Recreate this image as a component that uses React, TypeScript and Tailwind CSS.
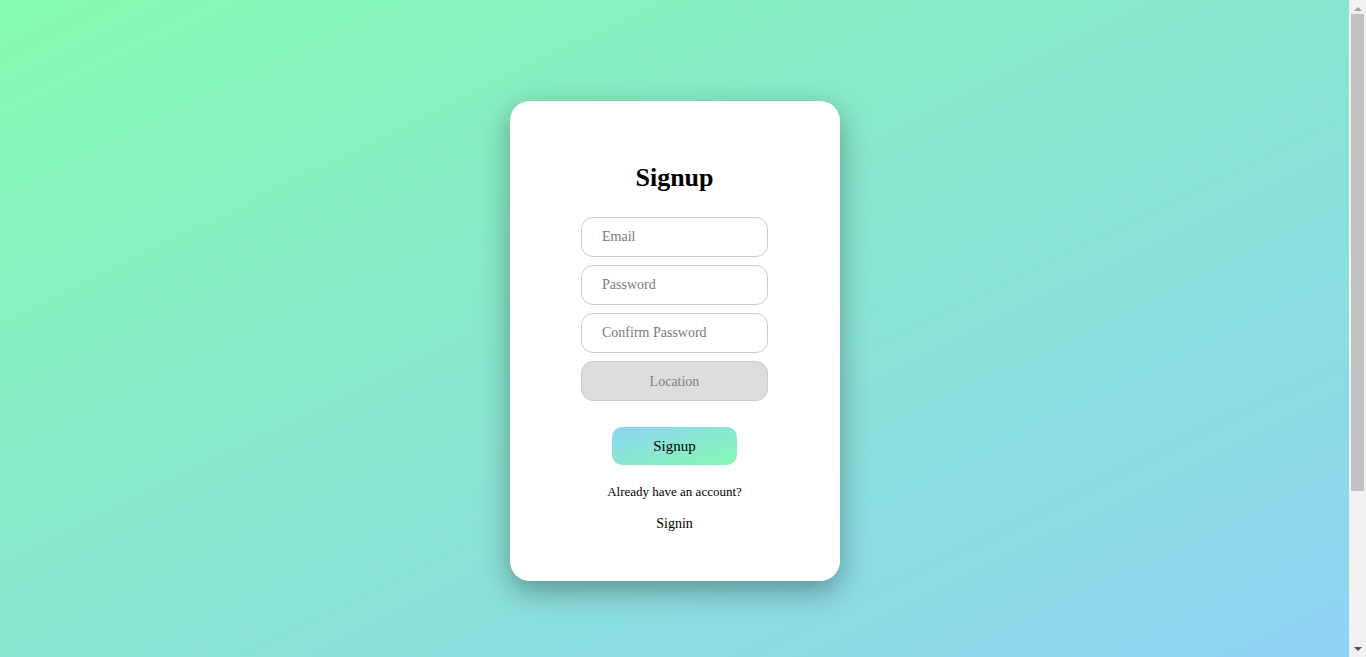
// Pagina di registrazione: card bianca centrata su sfondo sfumato verde/azzurro.
// A destra una barra di scorrimento disegnata (nel riferimento c'e quella del browser).

const campoCls =
  "h-10 w-full rounded-xl border border-[#cccccc] bg-white px-5 text-[14px] text-black outline-none placeholder:text-[#7a7a7a]";

function BarraScorrimento() {
  return (
    <div className="flex h-full w-[17px] shrink-0 flex-col items-center bg-[#f1f1f1]">
      <div className="flex h-[17px] w-full items-center justify-center">
        <div className="h-0 w-0 border-x-[4px] border-b-[4px] border-x-transparent border-b-[#a3a3a3]" />
      </div>
      <div className="mt-[-3px] h-[477px] w-[13px] bg-[#c1c1c1]" />
      <div className="flex-1" />
      <div className="flex h-[17px] w-full items-center justify-center">
        <div className="h-0 w-0 border-x-[4px] border-t-[4px] border-x-transparent border-t-[#505050]" />
      </div>
    </div>
  );
}

export default function App() {
  return (
    <div
      className="flex h-screen overflow-hidden text-black"
      style={{ fontFamily: '"Liberation Serif", "Times New Roman", serif' }}
    >
      <main className="flex-1 bg-[linear-gradient(to_bottom_right,#84fab0,#8fd3f4)] pt-[101px]">
        <div className="mx-auto flex w-[330px] flex-col items-center rounded-[20px] bg-white pb-[49px] pt-[62px] shadow-[0_10px_30px_rgba(0,0,0,0.35)]">
          <h1 className="text-[26px] leading-[30px] font-bold">Signup</h1>

          <form className="mt-[24px] flex w-[187px] flex-col gap-2">
            <input type="email" placeholder="Email" className={campoCls} />
            <input type="password" placeholder="Password" className={campoCls} />
            <input
              type="password"
              placeholder="Confirm Password"
              className={campoCls}
            />
            <button
              type="button"
              className="h-10 w-full rounded-xl border border-[#cccccc] bg-[#dddddd] text-[14px] text-[#808080]"
            >
              Location
            </button>
          </form>

          <button
            type="button"
            className="mt-[26px] h-[38px] w-[125px] rounded-[10px] bg-[linear-gradient(to_bottom_right,#8fd3f4,#84fab0)] text-[15px] text-black"
          >
            Signup
          </button>

          <p className="mt-[19px] text-[13px] leading-4">Already have an account?</p>
          <a href="#" className="mt-[16px] text-[14px] leading-4 text-black">
            Signin
          </a>
        </div>
      </main>
      <BarraScorrimento />
    </div>
  );
}
